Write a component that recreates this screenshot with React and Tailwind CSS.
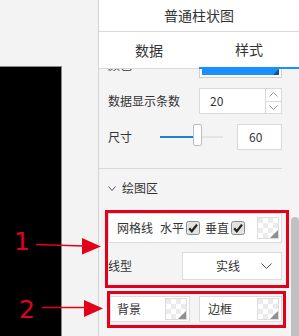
import React from "react";

const RED = "#e3001b";

function Swatch() {
  const cells = [];
  for (let r = 0; r < 4; r++) {
    for (let c = 0; c < 4; c++) {
      if ((r + c) % 2 === 0) {
        cells.push(<rect key={`${r}-${c}`} x={1 + c * 5} y={1 + r * 5} width="5" height="5" fill="#ebebeb" />);
      }
    }
  }
  return (
    <svg width="22" height="22" viewBox="0 0 22 22" className="shrink-0">
      <rect x="0.5" y="0.5" width="21" height="21" fill="#fff" stroke="#dcdcdc" />
      {cells}
      <polygon points="21,13 21,21 13,21" fill="#8f8f8f" />
    </svg>
  );
}

function Check() {
  return (
    <svg width="14" height="14" viewBox="0 0 14 14" className="shrink-0">
      <rect x="0.5" y="0.5" width="13" height="13" rx="2" fill="#e2e2e2" stroke="#8c8c8c" />
      <path d="M3.2 7.4 L5.8 10.2 L11 3.6" fill="none" stroke="#222" strokeWidth="2.3" />
    </svg>
  );
}

function Chevron({ up = false, w = 9, h = 5, color = "#999" }) {
  return (
    <svg width={w} height={h} viewBox={`0 0 ${w} ${h}`} className="shrink-0">
      <path
        d={up ? `M0.5 ${h - 0.5} L${w / 2} 0.5 L${w - 0.5} ${h - 0.5}` : `M0.5 0.5 L${w / 2} ${h - 0.5} L${w - 0.5} 0.5`}
        fill="none"
        stroke={color}
        strokeWidth="1"
      />
    </svg>
  );
}

export default function App() {
  return (
    <div className="relative flex w-[299px] h-[336px] overflow-hidden bg-[#f3f3f3] text-[#333] font-['Noto_Sans_CJK_SC',sans-serif]">
      {/* chart preview */}
      <div className="w-[98px] shrink-0 pt-[66px]">
        <div className="w-[62px] h-[270px] bg-black border-t border-r border-[#8a8a8a]" />
      </div>

      {/* settings panel */}
      <div className="flex flex-col w-[201px] border-l border-[#d4d4d4] bg-[#f4f4f4]">
        <div className="h-[32px] shrink-0 bg-white border-b border-[#d9d9d9] flex items-center justify-center text-[14px]">
          普通柱状图
        </div>
        <div className="h-[37px] shrink-0 flex bg-white border-b border-[#d9d9d9] text-[14px]">
          <div className="flex-1 flex items-center justify-center">数据</div>
          <div className="flex-1 flex items-center justify-center border-b-2 border-[#1890ff] -mb-px">样式</div>
        </div>

        <div className="flex flex-1 min-h-0">
          <div className="w-[192px] overflow-hidden pl-[9px] text-[12px]">
            {/* 颜色 (scrolled) */}
            <div className="-mt-[17px] h-[26px] w-[174px] flex items-center justify-between">
              <span>颜色</span>
              <div className="w-[83px] h-[26px] border border-[#cfcfcf] bg-white p-[2px]">
                <div className="relative w-full h-full bg-[#1890ff]">
                  <div className="absolute right-0 bottom-0 w-0 h-0 border-l-[6px] border-l-transparent border-b-[6px] border-b-[#1d4f86]" />
                </div>
              </div>
            </div>

            {/* 数据显示条数 */}
            <div className="mt-[10px] h-[26px] w-[174px] flex items-center justify-between">
              <span>数据显示条数</span>
              <div className="w-[83px] h-[26px] border border-[#d9d9d9] bg-white flex">
                <div className="flex-1 flex items-center pl-[10px]">20</div>
                <div className="w-[16px] border-l border-[#d9d9d9] flex flex-col">
                  <div className="flex-1 flex items-center justify-center border-b border-[#d9d9d9]">
                    <Chevron up />
                  </div>
                  <div className="flex-1 flex items-center justify-center">
                    <Chevron />
                  </div>
                </div>
              </div>
            </div>

            {/* 尺寸 */}
            <div className="mt-[10px] h-[26px] w-[174px] flex items-center">
              <span className="w-[52px]">尺寸</span>
              <div className="relative w-[63px] h-[26px] flex items-center">
                <div className="w-[33px] h-[2px] bg-[#1a7fd6]" />
                <div className="flex-1 h-[2px] bg-[#e4e4e4]" />
                <div className="absolute left-[33px] top-0 w-[9px] h-[22px] bg-white border border-[#bdbdbd] rounded-[2px]" />
              </div>
              <div className="ml-auto w-[45px] h-[26px] border border-[#d9d9d9] bg-white flex items-center pl-[11px]">60</div>
            </div>

            <div className="mt-[18px] -ml-[9px] w-[183px] h-px bg-[#d9d9d9]" />

            {/* 绘图区 */}
            <div className="mt-[10px] h-[18px] flex items-center">
              <Chevron w={8} h={5} color="#555" />
              <span className="ml-[6px]">绘图区</span>
            </div>

            {/* box 1 */}
            <div className="mt-[13px] -ml-[3px] w-[184px] border-[3px] pb-[5px]" style={{ borderColor: RED }}>
              <div className="w-[174px] h-[30px] border border-[#dcdcdc] bg-white flex items-center pl-[8px] pr-[2px]">
                <span>网格线</span>
                <span className="ml-[7px]">水平</span>
                <span className="ml-[2px]"><Check /></span>
                <span className="ml-[5px]">垂直</span>
                <span className="ml-[2px]"><Check /></span>
                <span className="ml-auto"><Swatch /></span>
              </div>
              <div className="mt-[9px] w-[174px] h-[28px] flex items-center justify-between">
                <span>线型</span>
                <div className="w-[100px] h-[28px] border border-[#dcdcdc] bg-white flex items-center justify-end pr-[9px]">
                  <span>实线</span>
                  <span className="ml-[21px]"><Chevron w={11} h={6} color="#555" /></span>
                </div>
              </div>
            </div>

            {/* box 2 */}
            <div className="mt-[3px] -ml-[1px] w-[179px] border-[3px] pt-[2px] pb-[3px] flex" style={{ borderColor: RED }}>
              <div className="w-[80px] h-[26px] border border-[#dcdcdc] bg-white flex items-center pl-[6px] pr-[2px]">
                <span>背景</span>
                <span className="ml-auto"><Swatch /></span>
              </div>
              <div className="ml-[9px] w-[83px] h-[26px] border border-[#dcdcdc] bg-white flex items-center pl-[8px] pr-[2px]">
                <span>边框</span>
                <span className="ml-auto"><Swatch /></span>
              </div>
            </div>
          </div>

          {/* scrollbar */}
          <div className="w-[8px] flex flex-col pt-[148px]">
            <div className="flex-1 bg-[#c1c1c1] rounded-t-full" />
          </div>
        </div>
      </div>

      {/* annotations */}
      <span className="absolute left-[14px] top-[229px] text-[25px] leading-none text-[#e3001b] font-['DejaVu_Sans',sans-serif]">1</span>
      <span className="absolute left-[19px] top-[297px] text-[25px] leading-none text-[#e3001b] font-['DejaVu_Sans',sans-serif]">2</span>
      <svg className="absolute left-0 top-0 pointer-events-none" width="299" height="336" viewBox="0 0 299 336">
        <line x1="36" y1="244.5" x2="84" y2="246" stroke={RED} strokeWidth="1.4" />
        <polygon points="82,238 101,246.5 82,254.5" fill={RED} />
        <line x1="42" y1="307.5" x2="86" y2="307.5" stroke={RED} strokeWidth="1.4" />
        <polygon points="84,300 103,308.5 84,317" fill={RED} />
      </svg>
    </div>
  );
}
